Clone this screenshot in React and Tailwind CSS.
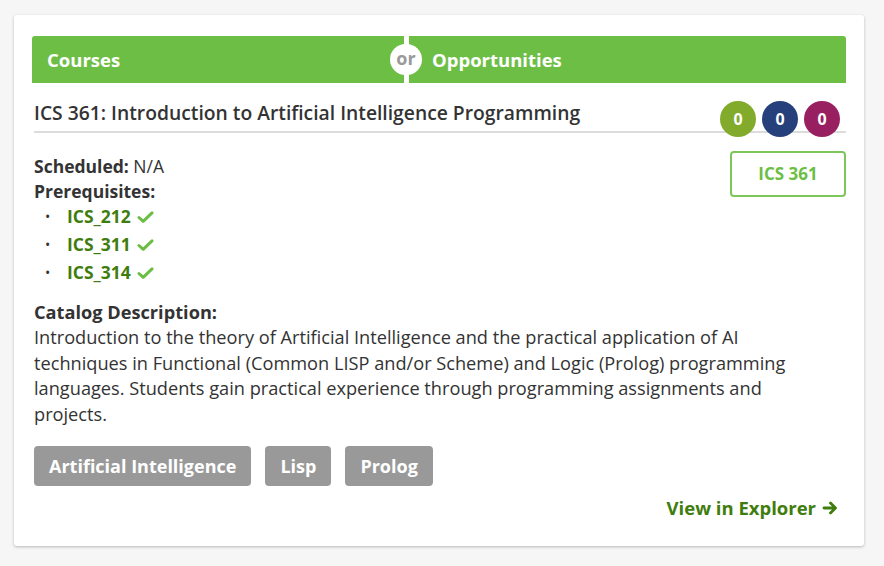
import React from 'react';

const prereqs = ['ICS_212', 'ICS_311', 'ICS_314'];
const tags = ['Artificial Intelligence', 'Lisp', 'Prolog'];
const counts = [
  { id: 1, color: 'bg-[#82aa2b]' },
  { id: 2, color: 'bg-[#25407b]' },
  { id: 3, color: 'bg-[#981f60]' }
];

const Check = () => (
  <svg width="17" height="14" viewBox="0 0 17 14" className="ml-[6px] inline-block">
    <path d="M2 7.5 L6.2 11.3 L15 2.8" fill="none" stroke="#6cbd45" strokeWidth="3" strokeLinecap="round" strokeLinejoin="round" />
  </svg>
);

const App = () => {
  return (
    <div className="min-h-screen w-full bg-[#f6f6f6] pt-[15px] px-[14px] pb-[20px]" style={{ fontFamily: '"Open Sans", sans-serif' }}>
      <div className="bg-white rounded-[3px] shadow-[0_1px_3px_rgba(0,0,0,0.25)] pt-[21px] px-[18px] pb-[24px] w-[850px]">
        {/* Courses / Opportunities header */}
        <div className="relative flex h-[47px]">
          <div className="w-[372px] bg-[#6dbe45] rounded-tl-[3px] flex items-center pl-[15px]">
            <span className="text-white font-bold text-[18.5px]">Courses</span>
          </div>
          <div className="w-[5px] bg-white" />
          <div className="flex-1 bg-[#6dbe45] rounded-tr-[3px] flex items-center pl-[23px]">
            <span className="text-white font-bold text-[18.5px]">Opportunities</span>
          </div>
          <div className="absolute left-[358px] top-[8px] w-[32px] h-[31px] rounded-full bg-white flex items-center justify-center">
            <span className="text-[#9a9a9a] font-bold text-[18px] leading-none -mt-[4px]">or</span>
          </div>
        </div>

        {/* Title */}
        <div className="relative mt-[16px] pl-[2px]">
          <div className="border-b-2 border-[#dcdcdc] pb-[3px]">
            <h2 className="text-[19.3px] font-semibold text-[#333]">ICS 361: Introduction to Artificial Intelligence Programming</h2>
          </div>
          <div className="absolute right-[6px] top-[2px] flex gap-[6px]">
            {counts.map((c) => (
              <div key={c.id} className={`${c.color} w-[36px] h-[36px] rounded-full flex items-center justify-center text-white font-bold text-[16px]`}>0</div>
            ))}
          </div>
        </div>

        {/* Details */}
        <div className="flex justify-between pl-[2px] mt-[21px]">
          <div className="text-[17.5px] text-[#333] leading-[25px]">
            <div><span className="font-bold">Scheduled:</span> N/A</div>
            <div className="font-bold">Prerequisites:</div>
            <ul className="mt-[-1px]">
              {prereqs.map((p) => (
                <li key={p} className="flex items-center h-[28px] pl-[11px]">
                  <span className="text-[#333] text-[14px] w-[22px]">•</span>
                  <span className="font-bold text-[#3f7d0e]">{p}</span>
                  <Check />
                </li>
              ))}
            </ul>
          </div>
          <div>
            <div className="mt-[-3px] w-[116px] h-[46px] border-2 border-[#7cc65a] rounded-[4px] flex items-center justify-center text-[#6dbe45] font-bold text-[17px]">
              ICS 361
            </div>
          </div>
        </div>

        {/* Catalog description */}
        <div className="pl-[2px] mt-[13px] text-[18.2px] text-[#333] leading-[25.5px] pr-[20px]">
          <div className="font-bold">Catalog Description:</div>
          <p>
            Introduction to the theory of Artificial Intelligence and the practical application of AI techniques in Functional (Common LISP and/or Scheme) and Logic (Prolog) programming languages. Students gain practical experience through programming assignments and projects.
          </p>
        </div>

        {/* Tags */}
        <div className="flex gap-[14px] pl-[2px] mt-[19px]">
          {tags.map((t) => (
            <span key={t} className="h-[40px] px-[15px] bg-[#999] rounded-[4px] text-white font-bold text-[18px] flex items-center">{t}</span>
          ))}
        </div>

        {/* View in explorer */}
        <div className="flex justify-end pr-[8px] mt-[8px]">
          <a className="flex items-center text-[#3f7d0e] font-bold text-[18.5px]">
            View in Explorer
            <svg width="16" height="16" viewBox="0 0 16 16" className="ml-[6px]">
              <path d="M2 8 H13 M8.5 3 L13.5 8 L8.5 13" fill="none" stroke="#3f7d0e" strokeWidth="2.8" strokeLinecap="round" strokeLinejoin="round" />
            </svg>
          </a>
        </div>
      </div>
    </div>
  );
};

export default App;
